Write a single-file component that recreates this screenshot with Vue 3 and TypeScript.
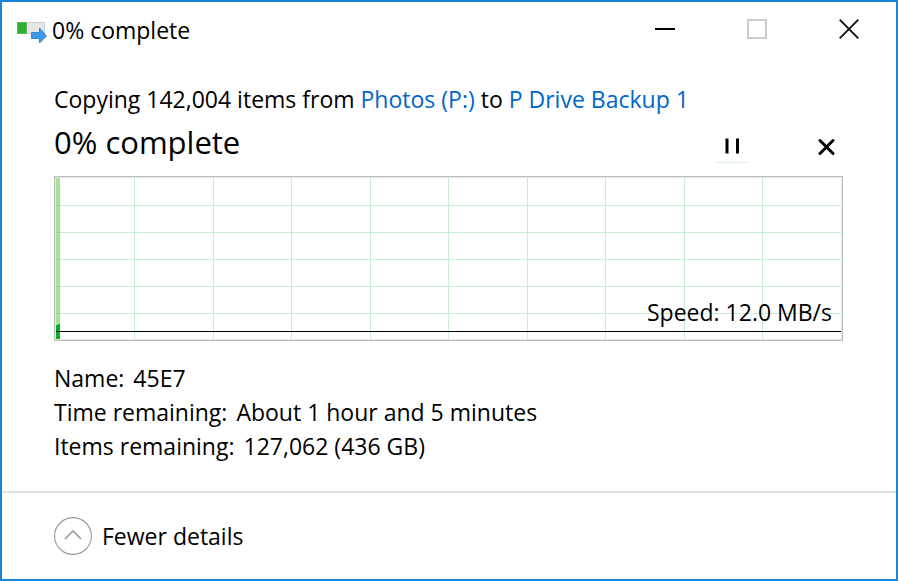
<script setup lang="ts">
import { computed, ref } from 'vue'

interface Detail {
  label: string
  value: string
}

const percent = ref(0)
const status = computed(() => `${percent.value}% complete`)
const speed = 'Speed: 12.0 MB/s'

const details: Detail[] = [
  { label: 'Name:', value: '45E7' },
  { label: 'Time remaining:', value: 'About 1 hour and 5 minutes' },
  { label: 'Items remaining:', value: '127,062 (436 GB)' },
]

const columns = Array.from({ length: 9 }, (_, i) => `${(i + 1) * 10}%`)
const rows = Array.from({ length: 5 }, (_, i) => (i + 1) * 27)
</script>

<template>
  <div class="window">
    <header class="titlebar">
      <svg class="app-icon" width="31" height="22" viewBox="0 0 31 22" aria-hidden="true">
        <rect x="0.5" y="0.5" width="27" height="11" fill="#e6e6e6" stroke="#cfcfcf" />
        <rect x="0.5" y="0.5" width="9" height="11" fill="#30b030" stroke="#58b558" />
        <path d="M14.500 10.500h8V6l7 8-7 7v-4.500h-8z" fill="#3c9ae8" stroke="#3289d6" />
      </svg>
      <span class="title">{{ status }}</span>
      <div class="controls">
        <button type="button" class="control" aria-label="Minimize">
          <svg width="20" height="20" viewBox="0 0 20 20"><path d="M0 10h20" stroke="#000" stroke-width="2" /></svg>
        </button>
        <button type="button" class="control" aria-label="Maximize" disabled>
          <svg width="20" height="20" viewBox="0 0 20 20"><rect x="1" y="1" width="18" height="18" fill="none" stroke="#ccc" stroke-width="2" /></svg>
        </button>
        <button type="button" class="control" aria-label="Close">
          <svg width="20" height="20" viewBox="0 0 20 20"><path d="M.7.7l18.600 18.600M19.300.7L.7 19.300" stroke="#111" stroke-width="1.900" /></svg>
        </button>
      </div>
    </header>

    <main class="content">
      <p class="summary">
        Copying 142,004 items from <a href="#">Photos (P:)</a> to <a href="#">P Drive Backup 1</a>
      </p>
      <div class="progress-row">
        <h1 class="progress">{{ status }}</h1>
        <div class="actions">
          <button type="button" class="action pause" aria-label="Pause">
            <svg width="16" height="16" viewBox="0 0 16 16"><path d="M3 .5v15M13.500.5v15" stroke="#000" stroke-width="3" /></svg>
          </button>
          <button type="button" class="action" aria-label="Cancel">
            <svg width="18" height="18" viewBox="0 0 18 18"><path d="M3 3.500l13 13M16 3.500l-13 13" stroke="#000" stroke-width="3" stroke-linecap="round" /></svg>
          </button>
        </div>
      </div>

      <div class="chart">
        <svg class="plot" width="100%" height="100%" shape-rendering="crispEdges" aria-hidden="true">
          <g stroke="#c8eed2">
            <line v-for="x in columns" :key="x" :x1="x" :x2="x" y1="0" y2="100%" />
            <line v-for="y in rows" :key="y" x1="0" x2="100%" :y1="y" :y2="y" />
          </g>
          <rect width="4" height="100%" fill="#a7e491" />
          <path v-for="y in rows" :key="`m${y}`" :d="`M0 ${y}h4`" stroke="#8edb80" />
          <path d="M0 147h2v-1h2v15H0z" fill="#06b025" />
          <line x1="0" x2="100%" y1="153" y2="153" stroke="#000" />
        </svg>
        <span class="speed">{{ speed }}</span>
      </div>

      <dl class="details">
        <div v-for="item in details" :key="item.label" class="detail">
          <dt>{{ item.label }}</dt>
          <dd>{{ item.value }}</dd>
        </div>
      </dl>
    </main>

    <footer class="footer">
      <button type="button" class="toggle">
        <svg width="38" height="38" viewBox="0 0 38 38" fill="none" aria-hidden="true">
          <circle cx="19" cy="19" r="18.400" stroke="#999" stroke-width="1.100" />
          <path d="M11 22l8-8 8 8" stroke="#999" stroke-width="1.600" />
        </svg>
        <span>Fewer details</span>
      </button>
    </footer>
  </div>
</template>

<style>
body {
  margin: 0;
}
</style>

<style scoped>
.window {
  box-sizing: border-box;
  display: flex;
  flex-direction: column;
  min-height: 100vh;
  border: 2px solid #1883d7;
  background: #fff;
  color: #000;
  font-family: "Segoe UI", "Open Sans", "Noto Sans", sans-serif;
  font-size: 23px;
  line-height: 34px;
}

button {
  padding: 0;
  border: 0;
  background: none;
  color: inherit;
  font: inherit;
}

svg {
  display: block;
}

.titlebar {
  display: flex;
  align-items: center;
  height: 56px;
  padding: 0 1px 0 15px;
}

.app-icon {
  margin-top: 6px;
}

.title {
  margin-left: 4px;
}

.controls {
  display: flex;
  align-self: flex-start;
  margin-left: auto;
}

.control {
  display: grid;
  place-items: center;
  width: 92px;
  height: 54px;
}

.content {
  flex: 1;
  padding: 24px 53px 0 52px;
}

.summary {
  margin: 0;
}

a {
  color: #0066cc;
  text-decoration: none;
}

.progress-row {
  display: flex;
  align-items: center;
  justify-content: space-between;
  height: 60px;
}

.progress {
  margin: 0 0 8px;
  font-size: 31px;
  font-weight: 400;
  line-height: 42px;
}

.actions {
  display: flex;
  gap: 60px;
}

.action {
  display: grid;
  place-items: center;
  box-sizing: border-box;
  width: 34px;
  height: 34px;
  border-bottom: 1px solid transparent;
}

.pause {
  border-bottom-color: #def1fb;
}

.chart {
  display: grid;
  box-sizing: border-box;
  height: 165px;
  border: 1px solid #bcbcbc;
  box-shadow: inset 0 0 0 1px #e6e6e6;
  padding: 1px;
}

.plot,
.speed {
  grid-area: 1 / 1;
}

.speed {
  place-self: end;
  margin: 0 9px 10px 0;
}

.details {
  margin: 20px 0 0;
}

.detail {
  display: flex;
  gap: 9px;
}

dd {
  margin: 0;
}

.footer {
  padding: 24px 52px;
  border-top: 2px solid #e3e3e3;
}

.toggle {
  display: flex;
  align-items: center;
  gap: 10px;
}
</style>
